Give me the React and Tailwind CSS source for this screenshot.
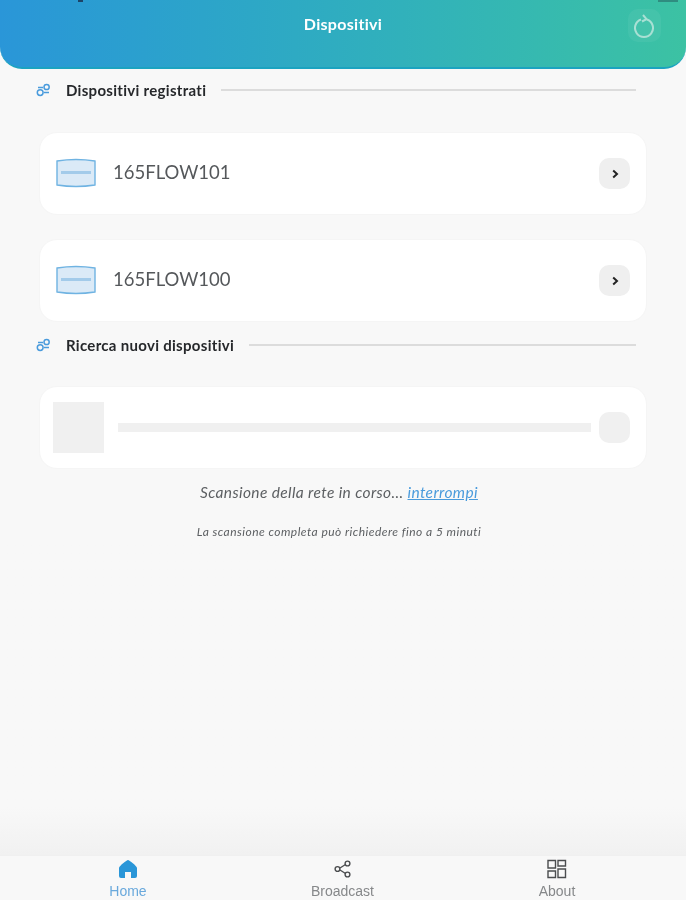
const font = { fontFamily: "Lato, sans-serif" };

const LinkIcon = () => (
  <svg width="15" height="14" viewBox="0 0 15 14" fill="none" stroke="#4a9bdc" strokeWidth="1.5">
    <circle cx="4.2" cy="9.6" r="2.9" />
    <circle cx="10.6" cy="4" r="2.6" />
    <path d="M2 4.6h5M8 9.6h5" />
  </svg>
);

const DeviceIcon = () => (
  <svg width="42" height="30" viewBox="0 0 42 30" fill="none" className="mt-[-2px]">
    <path d="M2 3Q21 0 40 3V27Q21 30 2 27Z" fill="#dbeaf7" stroke="#6fb3e2" strokeWidth="1.4" />
    <path d="M6 14.5H36" stroke="#a3cbea" strokeWidth="3" />
  </svg>
);

const SectionTitle = ({ title }) => (
  <div className="flex items-center pl-[36px] pr-[50px] h-[20px]">
    <LinkIcon />
    <span className="ml-[15px] text-[15px] tracking-[0.3px] font-bold text-[#26282b] whitespace-nowrap">{title}</span>
    <div className="h-[2px] bg-[#dcdcdc] grow ml-[15px]" />
  </div>
);

const DeviceCard = ({ name }) => (
  <div className="mx-[39px] h-[83px] bg-white rounded-[18px] border border-[#f5f5f5] flex items-center pl-[15px] pr-[16px]">
    <DeviceIcon />
    <span className="ml-[16px] mt-[-2px] text-[18.5px] text-[#55585b] grow">{name}</span>
    <div className="w-[31px] h-[31px] rounded-[10px] bg-[#efefef] flex items-center justify-center">
      <svg width="10" height="10" viewBox="0 0 10 10" fill="none" stroke="#222" strokeWidth="2">
        <path d="M3.2 1.5 7 5 3.2 8.5" />
      </svg>
    </div>
  </div>
);

const NavItem = ({ label, active, children }) => (
  <div className="flex flex-col items-center w-[120px]">
    <div className="h-[25px] flex items-center justify-center">{children}</div>
    <span
      className={`mt-[3px] text-[14px] leading-[15px] ${active ? "text-[#6aa9dc]" : "text-[#86888a]"}`}
      style={{ fontFamily: "'Liberation Sans', sans-serif" }}
    >
      {label}
    </span>
  </div>
);

export default function App() {
  return (
    <div className="w-[686px] h-[900px] bg-[#f8f8f8] flex flex-col overflow-hidden blur-[0.5px]" style={font}>
      <header className="h-[69px] shrink-0 rounded-b-[22px] bg-gradient-to-r from-[#2a96d8] to-[#3cc2a3] border-b-2 border-[#1ba3c0] flex items-center justify-center relative">
        <span className="text-white font-bold text-[16px] tracking-[0.3px] mt-[-19px]">Dispositivi</span>
        <div className="absolute left-[78px] top-0 w-[5px] h-[2px] bg-[#1c4468]" />
        <div className="absolute right-[8px] top-0 w-[20px] h-[2px] bg-[#2f8d80]" />
        <div className="absolute right-[25px] top-[9px] w-[33px] h-[33px] rounded-[10px] bg-white/5 flex items-center justify-center">
          <svg width="22" height="24" viewBox="0 0 22 24" fill="none" stroke="#a9e0d4" strokeWidth="2">
            <path d="M7 5.5a9 9 0 1 0 6 0" />
            <path d="M9 1l3.5 4.2L8 7.5" />
          </svg>
        </div>
      </header>

      <div className="mt-[11px]">
        <SectionTitle title="Dispositivi registrati" />
      </div>
      <div className="mt-[32px]">
        <DeviceCard name="165FLOW101" />
      </div>
      <div className="mt-[24px]">
        <DeviceCard name="165FLOW100" />
      </div>
      <div className="mt-[13px]">
        <SectionTitle title="Ricerca nuovi dispositivi" />
      </div>

      <div className="mt-[31px] mx-[39px] h-[83px] bg-white rounded-[18px] border border-[#f5f5f5] flex items-center pl-[13px] pr-[16px]">
        <div className="w-[51px] h-[51px] bg-[#f0f0f0]" />
        <div className="ml-[14px] h-[9px] bg-[#f0f0f0] grow" />
        <div className="ml-[8px] w-[31px] h-[31px] rounded-[10px] bg-[#f0f0f0]" />
      </div>

      <p className="mt-[13px] pr-[8px] text-center text-[15.5px] tracking-[0.37px] leading-[20px] italic text-[#5c5f62]">
        Scansione della rete in corso...{" "}
        <span className="text-[#4a9bdc] underline">interrompi</span>
      </p>
      <p className="mt-[23px] pr-[8px] text-center text-[12px] tracking-[0.46px] leading-[14px] italic text-[#5c5f62]">
        La scansione completa può richiedere fino a 5 minuti
      </p>

      <div className="grow bg-gradient-to-b from-[#f8f8f8] from-85% to-[#f1f1f1]" />

      <nav className="h-[45px] shrink-0 bg-[#f8f8f8] border-t border-[#f0f0f0] flex justify-between pl-[68px] pr-[69px]">
        <NavItem label="Home" active>
          <svg width="20" height="20" viewBox="0 0 20 20" fill="#2a96d8">
            <path d="M10 1 C11 1 19 7 19 9V17a2 2 0 0 1-2 2h-4v-6H7v6H3a2 2 0 0 1-2-2V9C1 7 9 1 10 1Z" />
          </svg>
        </NavItem>
        <NavItem label="Broadcast">
          <svg width="18" height="18" viewBox="0 0 18 18" fill="none" stroke="#4b4d4f" strokeWidth="1.4">
            <circle cx="3.5" cy="9" r="2.4" />
            <circle cx="13.5" cy="3.5" r="2.4" />
            <circle cx="13.5" cy="14.5" r="2.4" />
            <path d="M6 8l5.5-3.5M6 10l5.5 3.5" />
          </svg>
        </NavItem>
        <NavItem label="About">
          <svg width="20" height="20" viewBox="0 0 20 20" fill="none" stroke="#4b4d4f" strokeWidth="1.4">
            <path d="M1 9V1.5h7.5V9ZM11 1.5h7.5V7H11ZM1 12h7.5v6.5H1ZM11 10h7.5v8.5H11Z" />
          </svg>
        </NavItem>
      </nav>
    </div>
  );
}
